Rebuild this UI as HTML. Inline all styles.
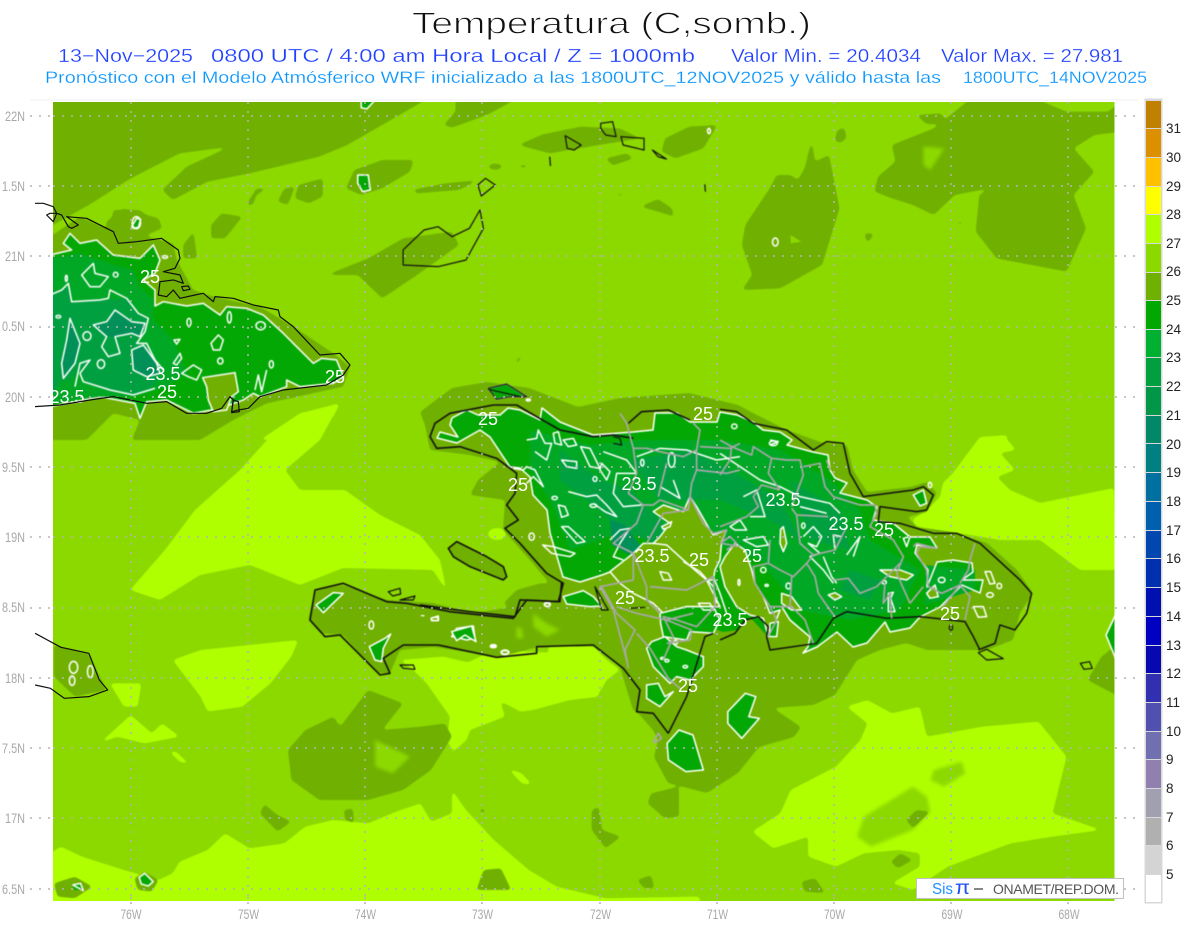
<!DOCTYPE html>
<html><head><meta charset="utf-8"><title>Temperatura</title>
<style>
html,body{margin:0;padding:0;background:#fff}
svg{display:block}
text{font-family:"Liberation Sans",sans-serif;white-space:pre}
.d{fill:#70b000}.l{fill:#b0ff00}.m{fill:#8cd900}
.g1{fill:#04a804}.g2{fill:#00a826}.g3{fill:#00a040}.g4{fill:#009058}
.w{fill:none;stroke:#fff;stroke-width:1.5;vector-effect:non-scaling-stroke;stroke-linejoin:round}
.wd{fill:#70b000;stroke:#fff;stroke-width:1.5;vector-effect:non-scaling-stroke;stroke-linejoin:round}
.wg{fill:#04a804;stroke:#fff;stroke-width:1.5;vector-effect:non-scaling-stroke;stroke-linejoin:round}
.k{fill:none;stroke:#111;stroke-width:1.2;vector-effect:non-scaling-stroke;stroke-linejoin:round}
.y{fill:none;stroke:#a8a8a8;stroke-width:1.7;vector-effect:non-scaling-stroke;stroke-linejoin:round}
.lb{fill:#fff;font-size:18px;text-anchor:middle}
.ax{fill:#a8a8a8;font-size:13.5px}
.lg{fill:#222;font-size:13.5px}
</style></head><body>
<svg width="1200" height="927" viewBox="0 0 1200 927" xmlns="http://www.w3.org/2000/svg">
<rect width="1200" height="927" fill="#fff"/>
<defs>
<clipPath id="mp"><rect x="53" y="102" width="1061.500" height="799"/></clipPath>
<filter id="rd" filterUnits="userSpaceOnUse" x="0" y="0" width="1200" height="927" color-interpolation-filters="sRGB">
<feGaussianBlur stdDeviation="1.8"/>
<feComponentTransfer><feFuncA type="linear" slope="7" intercept="-3"/></feComponentTransfer>
</filter>
<filter id="sf" filterUnits="userSpaceOnUse" x="0" y="0" width="1200" height="927" color-interpolation-filters="sRGB">
<feGaussianBlur stdDeviation="0.45"/>
</filter>
</defs>
<g clip-path="url(#mp)">
<rect x="53" y="102" width="1062" height="799" class="m"/>
<g filter="url(#sf)">

<g filter="url(#rd)">
<!-- light regions -->
<polygon class="l" points="340,403 300,414 267,440 240,470 195,510 165,550 130,590 160,600 200,575 250,565 300,585 343,568 433,570 447,592 440,560 420,535 380,515 345,490 300,490 285,470 320,440"/>
<ellipse class="l" cx="497" cy="534" rx="9" ry="6"/>
<polygon class="l" points="1035,433 1005,437 1016,450 1000,453 1015,470 997,477 1010,490 1040,503 1114,488 1116,570 1080,570 1040,540 1000,540 953,532 917,527 912,520 927,510 940,497 943,483 953,473 980,437"/>
<g transform="translate(300 570) scale(.3333)">
<polygon class="l" points="300,270 430,260 600,300 770,280 740,230 880,230 920,270 960,300 920,330 900,365 700,420 660,425 600,390 615,440 510,480 500,510 460,545 440,510 450,440 380,340 340,300"/>
</g>
<g transform="translate(40 640) scale(.6983 .3333)">
<polygon class="l" points="15,640 30,620 60,650 120,690 170,720 190,700 200,665 240,630 265,580 300,625 350,610 380,560 420,540 470,550 510,515 545,490 560,545 590,520 590,450 610,510 650,600 700,690 740,740 810,775 945,770 945,800 15,800"/>
<polygon class="l" points="190,60 230,30 370,0 360,50 330,130 290,200 240,215 230,170"/>
<polygon class="l" points="85,310 130,225 160,280 175,250 200,290 150,310 110,290"/>
<polygon class="l" points="100,130 145,130 140,200 120,200"/>
<polygon class="l" points="185,335 195,335 215,375 200,365"/>
<polygon class="l" points="1185,180 1155,200 1185,250 1175,300 1140,380 1075,450 1060,520 1020,575 1050,625 1100,590 1100,650 1140,680 1180,640 1230,630 1260,640 1260,680 1220,730 1250,750 1300,680 1390,610 1450,590 1520,570 1450,520 1470,350 1430,245 1350,260 1270,290 1260,200 1220,220"/>
<polygon class="l" points="590,220 660,185 690,215 740,185 800,170 800,100 750,40 650,30 560,120 600,170"/>
<polygon class="l" points="670,385 690,400 705,435 690,430"/>
<polygon class="m" points="1280,390 1320,365 1325,400 1295,440 1275,420"/>
<polygon class="m" points="1180,530 1250,440 1270,470 1275,515 1250,570 1190,620 1170,590"/>
<polygon class="m" points="1140,700 1190,650 1250,650 1220,700 1170,750"/>
</g>
</g>

<g filter="url(#rd)">
<!-- dark regions top -->
<g transform="translate(40 95) scale(.6983 .3333)">
<polygon class="d" points="15,15 552,15 490,90 440,150 400,185 300,235 240,260 190,315 175,285 210,215 272,155 200,175 130,250 70,330 40,365 15,395"/>
<polygon class="d" points="595,15 680,15 640,60 590,98 578,90 595,50"/>
<polygon class="d" points="450,225 490,195 535,195 530,230 490,280 460,300 438,280"/>
<polygon class="d" points="295,330 310,280 325,280 310,300 305,330"/>
<polygon class="d" points="340,320 350,280 365,275 355,330"/>
<polygon class="d" points="370,270 405,250 405,305 385,325 365,310"/>
<polygon class="d" points="245,390 260,355 290,365 265,430 245,430"/>
<polygon class="d" points="205,450 220,410 225,490 205,490"/>
<polygon class="d" points="533,285 580,265 628,255 600,285 540,295"/>
<polygon class="d" points="685,150 720,118 775,95 830,100 860,130 800,150 730,175"/>
<polygon class="d" points="895,130 930,95 970,90 950,160 910,190 890,170"/>
<polygon class="d" points="810,190 840,175 850,190 820,212"/>
<ellipse class="d" cx="652" cy="215" rx="10" ry="9"/><ellipse class="d" cx="692" cy="214" rx="6" ry="5"/>
<polygon class="d" points="860,335 885,312 905,340 908,365 885,350"/>
<polygon class="d" points="820,295 840,295 830,305"/>
<polygon class="d" points="1005,450 1010,390 1045,280 1055,240 1075,240 1085,255 1095,220 1105,135 1110,200 1130,180 1145,340 1120,510 1060,580 1005,585 1020,540"/>
<polygon class="d" points="1255,60 1290,55 1300,85 1270,88"/>
<polygon class="d" points="1195,290 1200,245 1225,200 1220,150 1280,100 1310,50 1330,15 1430,15 1470,50 1530,50 1550,15 1550,110 1510,120 1480,160 1510,230 1480,300 1498,400 1470,530 1370,490 1340,410 1345,300 1360,280 1310,300 1280,360 1250,330 1220,310"/>
<polygon class="m" points="1265,155 1295,160 1275,225 1265,210"/>
<polygon class="d" points="1142,105 1152,98 1155,130 1145,145 1138,135"/>
<polygon class="d" points="1180,415 1195,415 1185,445"/>
<polygon class="d" points="410,540 470,490 520,430 590,410 600,450 540,540 490,610 470,570 455,540"/>
<polygon class="d" points="95,380 120,340 170,370 175,400 130,440 95,400"/>
<polygon class="d" points="680,800 695,765 685,805"/>
<polygon class="d" points="920,405 930,395 925,410"/>
<polygon class="d" points="1310,385 1322,378 1320,392"/>
</g>

<!-- dark regions bottom -->
<g transform="translate(40 640) scale(.6983 .3333)">
<polygon class="d" points="355,330 380,270 420,230 430,260 470,150 520,190 490,270 545,260 580,250 590,290 560,390 520,450 470,480 400,480 360,420"/>
<polygon class="m" points="480,300 530,350 505,400 480,380"/>
<polygon class="d" points="875,460 915,440 915,530 895,535 870,490"/>
<polygon class="d" points="1550,0 1520,50 1500,120 1550,175"/>
<polygon class="d" points="315,520 330,455 320,490 340,525 360,545 340,575"/>
<polygon class="d" points="435,510 448,505 450,550 437,540"/>
<polygon class="d" points="790,510 800,500 805,570 832,590 810,625 790,570"/>
<polygon class="d" points="625,510 640,505 635,520"/>
<polygon class="d" points="635,690 660,685 675,750 625,750"/>
<polygon class="d" points="855,720 875,705 880,745 865,745"/>
<polygon class="d" points="1090,725 1110,715 1125,760 1095,755"/>
<polygon class="d" points="20,15 70,40 95,150 50,170 20,110"/>
<polygon class="d" points="20,730 50,710 75,740 50,775 25,770"/>
<polygon class="d" points="135,715 150,695 170,720 160,755 140,750"/>
<polygon class="d" points="1120,260 1128,262 1122,275"/>
<polygon class="d" points="1218,665 1232,640 1250,660 1228,685"/>
<polygon class="d" points="1240,540 1255,510 1275,515 1250,565"/>
</g>

<!-- dark around Cuba -->
<g transform="translate(0 200) scale(.3333)">
<polygon class="d" points="150,110 240,50 330,90 340,30 420,30 470,70 440,110 520,130 530,180 580,270 640,290 780,320 880,380 1000,460 1050,500 1030,560 800,610 700,660 600,720 395,720 420,660 340,640 260,720 150,720"/>
</g>

<!-- dark around Hispaniola -->
<polygon class="d" points="420,412 452,388 487,382 529,388 578,407 620,398 689,393 738,405 753,413 787,430 823,443 847,445 853,470 867,492 910,487 927,482 937,493 927,512 907,517 917,527 953,532 987,543 1017,570 1033,593 1020,613 1013,640 987,650 927,650 906,643 880,650 857,660 835,695 813,705 773,708 801,727 794,737 759,747 738,773 707,793 668,783 654,757 658,740 653,730 638,713 633,710 620,667 593,645 537,647 500,657 433,647 400,650 390,673 377,673 343,635 320,633 308,620 315,590 343,585 387,600 433,603 473,613 513,607 520,600 558,600 555,590 530,560 503,530 505,500 470,495 478,480 500,462 470,455 430,450 425,425"/>
<g transform="translate(420 380) scale(.3333)">
<polygon class="d" points="85,505 110,485 200,530 250,560 260,590 250,600 150,560 100,530"/>
</g>
<g transform="translate(300 570) scale(.3333)">
<polygon class="d" points="610,100 650,60 720,40 790,40 790,100 690,110 640,120"/>
<polygon class="m" points="650,170 665,175 670,205 650,205"/>
<polygon class="m" points="700,130 740,160 780,180 740,200 700,170"/>
</g>
</g>
<g filter="url(#rd)">
<g transform="translate(0 200) scale(.3333)"><polygon class="l" points="780,720 900,640 1020,610 1000,650 920,720"/></g>
<g transform="translate(40 95) scale(.6983 .3333)"><polygon class="l" points="745,765 765,765 755,772"/></g>
<g transform="translate(300 570) scale(.3333)"><polygon class="l" points="890,170 910,165 905,180"/></g>
</g>

<g transform="translate(40 640) scale(.6983 .3333)">
<polygon class="wg" points="142,712 150,700 162,725 155,738 145,732"/>
<polygon class="g1" points="45,735 58,730 62,750 50,750"/>
<polygon class="w" points="47,735 58,730 62,752"/>
</g>

<!-- Cuba green -->
<g transform="translate(0 200) scale(.3333)">
<polygon class="g1" stroke="#fff" style="stroke-width:1.5;vector-effect:non-scaling-stroke;stroke-linejoin:round" points="150,165 215,150 190,130 210,100 240,130 290,120 340,165 420,175 460,135 480,180 465,220 430,240 465,270 465,318 490,305 560,318 610,310 660,345 680,320 740,325 790,345 850,400 940,490 965,475 1010,480 1030,530 1000,550 900,560 860,540 860,560 780,590 760,580 730,600 660,625 580,640 500,600 440,605 420,655 405,610 300,590 150,620"/>
<polygon class="g2" points="150,175 240,160 330,190 400,210 420,260 460,300 460,360 520,420 560,520 500,560 400,590 300,590 150,610"/>
<polygon class="g3" points="150,290 205,260 215,305 325,300 380,295 415,340 445,355 435,395 410,430 440,430 465,480 490,510 460,560 400,585 330,570 250,545 240,510 210,540 185,540 150,600"/>
<polygon class="g4" points="280,375 320,365 345,330 395,365 435,370 420,410 395,400 345,410 320,410 305,400"/>
<polygon class="g4" points="395,450 430,435 470,490 480,520 440,530 400,510"/>
<polygon class="g4" points="210,355 200,420 185,490 190,535 225,490 240,430"/>
<polygon class="wd" points="608,533 660,525 705,518 715,575 695,590 680,630 640,635 625,600 620,560"/>
<polyline class="w" points="150,285 185,270 205,250 215,305 300,300 325,295 330,270 380,295 415,340 445,355 435,395 410,430 440,430 465,480 490,510"/>
<polygon class="w" points="280,375 320,365 345,330 395,365 435,370 420,410 395,400 345,410 360,460 325,470 305,440 320,410"/>
<polygon class="w" points="210,355 200,420 185,490 190,535 225,490 240,430"/>
<polygon class="w" points="245,225 280,190 285,220 325,230 300,260 270,260"/>
<polygon class="w" points="395,450 430,435 470,490 480,520 440,530 400,510"/>
<polyline class="w" points="225,560 240,490 270,480 240,520 250,545 330,570 400,585 465,565"/>
<polygon class="w" points="633,430 655,405 670,420 660,450 640,450"/>
<polygon class="w" points="545,520 580,495 605,510 590,540 565,530"/>
<polygon class="w" points="520,490 540,460 545,475 530,495"/>
<polygon class="w" points="522,420 540,418 530,432"/>
<ellipse class="w" cx="688" cy="352" rx="6" ry="17"/><ellipse class="w" cx="567" cy="367" rx="6" ry="12"/><ellipse class="w" cx="782" cy="377" rx="14" ry="12"/><ellipse class="w" cx="661" cy="483" rx="8" ry="9"/><ellipse class="w" cx="303" cy="492" rx="11" ry="13"/><ellipse class="w" cx="261" cy="408" rx="12" ry="13"/><ellipse class="w" cx="347" cy="224" rx="7" ry="7"/><ellipse class="w" cx="495" cy="171" rx="8" ry="4"/><ellipse class="w" cx="175" cy="350" rx="7" ry="4"/><ellipse class="w" cx="199" cy="235" rx="3" ry="9"/><ellipse class="w" cx="814" cy="493" rx="6" ry="11"/>
<polygon class="wg" points="395,80 410,55 422,58 415,82 400,85"/>
<polyline class="w" points="765,570 775,525 785,575 800,510"/>
</g>

<!-- Hispaniola green -->
<polygon class="g1" points="452,418 467,410 478,415 500,415 508,408 520,410 540,420 542,408 560,422 593,435 633,432 653,430 655,413 677,413 690,422 717,422 720,412 737,415 753,422 763,430 780,432 792,440 787,445 813,452 828,455 830,470 835,478 847,483 840,493 867,500 877,507 873,520 893,523 910,537 930,537 937,548 917,545 915,553 928,570 927,587 937,562 953,560 972,563 973,572 962,580 983,580 980,593 962,585 940,607 920,617 910,628 890,632 885,622 867,643 853,647 837,632 817,647 803,653 808,647 810,637 790,620 782,607 775,622 770,638 768,637 750,617 737,630 723,632 712,628 715,620 713,607 707,581 687,561 653,543 633,557 610,572 602,575 580,582 563,577 550,533 547,510 533,495 530,477 520,468 510,467 490,437 480,430 457,443 437,438 440,432 458,437 450,425"/>
<polygon class="g2" points="530,430 590,445 640,440 720,440 780,450 830,480 860,510 870,540 920,570 900,610 850,620 800,610 760,560 700,540 650,520 600,540 570,550 550,500 530,470"/>
<polygon class="g2" points="925,565 975,570 975,590 925,605"/>
<polygon class="g3" points="560,450 600,480 630,490 680,540 660,545 620,530 600,510 560,480"/>
<polygon class="g3" points="630,460 690,450 730,470 780,500 800,540 770,520 720,500 660,500"/>
<polygon class="g3" points="790,480 840,510 850,550 810,540"/>
<polygon class="g3" points="850,570 880,580 870,600 840,590"/>
<polygon class="g4" points="610,520 625,525 640,545 655,555 630,555 612,545"/>
<g fill="none">
<polyline class="w" points="452,418 467,410 478,415 500,415 508,408 520,410 540,420 542,408 560,422 593,435 633,432 653,430 655,413 677,413 690,422 717,422 720,412 737,415 753,422 763,430 780,432 792,440 787,445 813,452 828,455 830,470 835,478 847,483 840,493 867,500 877,507 873,520 893,523 910,537 930,537 937,548 917,545 915,553 928,570 927,587 937,562 953,560 972,563 973,572 962,580 983,580 980,593 962,585 940,607 920,617 910,628 890,632 885,622 867,643 853,647 837,632 817,647 803,653 808,647 810,637 790,620 782,607"/>
<polyline class="w" points="633,557 610,572 602,575 580,582 563,577 550,533 547,510 533,495 530,477 520,468 510,467 490,437 480,430 457,443 437,438 440,432 458,437 450,425 452,418"/>
</g>

<g transform="translate(420 380) scale(.3333)">
<polygon class="wd" points="570,575 640,520 670,490 740,490 790,540 860,600 880,640 900,680 880,680 800,680 730,700 700,670 640,640 600,610"/>
<polygon class="wd" points="810,350 830,380 870,450 880,465 920,450 905,485 900,540 885,570 880,600 860,600 790,540 740,495 700,490 720,470 750,430 700,395 730,375 790,395"/>
<polygon class="wg" points="720,700 800,680 880,680 900,720 880,760 810,755 800,780 730,770 722,730"/>
<polygon class="wg" points="430,650 490,632 520,650 545,678 510,680 440,672"/>
<polygon class="wg" points="205,25 260,12 320,50 270,50 230,58"/>
<polygon class="wg" points="95,770 110,745 160,738 165,775 140,780 120,775"/>
<polygon class="wd" points="725,440 755,425 750,440 730,448"/>
<polyline class="w" points="320,180 350,175 355,150 375,190 395,190 380,240 345,215"/>
<polygon class="w" points="400,160 415,155 425,195 405,190"/>
<polygon class="w" points="430,180 460,175 470,195 445,200"/>
<polygon class="w" points="425,240 470,245 470,265 440,260"/>
<polygon class="w" points="482,200 510,205 540,265 510,260"/>
<polygon class="w" points="545,250 570,275 560,300 540,270"/>
<polyline class="w" points="280,265 310,270 320,260 345,270 370,320 340,290 320,310"/>
<polygon class="w" points="425,440 445,440 495,485 470,490"/>
<polygon class="w" points="368,495 400,500 465,520 450,530 395,520"/>
<polygon class="w" points="415,375 435,380 445,405 425,412"/>
<polyline class="w" points="445,335 500,350 530,345 560,375 590,410 555,395 520,370"/>
<polyline class="w" points="550,215 620,240 650,280 590,280 580,340 610,380 665,375"/>
<polyline class="w" points="650,230 720,205 800,210 890,240 960,230"/>
<polyline class="w" points="720,320 780,355 760,300"/>
<polyline class="w" points="570,480 600,450 630,445 600,490 580,530 610,540"/>
<polyline class="w" points="790,545 840,575 880,620 890,670"/>
<polyline class="w" points="880,590 900,640 920,700"/>
<polygon class="w" points="720,575 745,580 755,600 730,600"/>
<polygon class="w" points="835,670 870,670 880,690 850,690"/>
<ellipse class="w" cx="667" cy="248" rx="5" ry="10"/><ellipse class="w" cx="755" cy="240" rx="10" ry="22"/><ellipse class="w" cx="525" cy="297" rx="6" ry="7"/><ellipse class="w" cx="404" cy="354" rx="8" ry="5"/><ellipse class="w" cx="520" cy="377" rx="10" ry="5"/><ellipse class="w" cx="335" cy="470" rx="8" ry="11"/><ellipse class="w" cx="382" cy="675" rx="8" ry="5"/><ellipse class="w" cx="325" cy="60" rx="6" ry="3"/><ellipse class="w" cx="45" cy="717" rx="11" ry="5"/><ellipse class="w" cx="220" cy="797" rx="8" ry="3"/><ellipse class="w" cx="255" cy="817" rx="12" ry="5"/>
</g>
<g transform="translate(720 380) scale(.3333)">
<polygon class="wd" points="15,530 45,490 75,510 95,570 105,610 130,650 150,700 180,690 165,730 145,770 130,715 90,705 50,680 15,620 0,560"/>
<polygon class="wg" points="150,730 175,725 170,770 148,770"/>
<polygon class="wd" points="620,640 645,615 655,650 630,655"/>
<polygon class="wd" points="795,575 812,575 825,610 810,612"/>
<polygon class="wd" points="760,680 790,680 800,710 775,712"/>
<polygon class="wd" points="185,640 215,650 245,690 215,690 185,670"/>
<polygon class="wd" points="325,645 345,638 365,650 345,660"/>
<polygon class="wd" points="480,570 540,570 580,585 560,600 510,590"/>
<polygon class="wd" points="182,448 190,440 200,490 190,515 180,490"/>
<polygon class="wg" points="580,345 610,330 620,370 600,378"/>
<polyline class="w" points="0,220 60,260 120,300 180,320 240,350 330,370 360,400"/>
<polyline class="w" points="240,380 320,400"/>
<polyline class="w" points="70,350 110,330 135,410 90,410"/>
<polyline class="w" points="150,180 175,185 150,195"/>
<polyline class="w" points="250,470 280,440 305,470 290,500 265,490 300,520 270,530 310,570 340,610"/>
<polyline class="w" points="380,525 420,470 400,530"/>
<polygon class="w" points="340,465 365,470 345,510"/>
<polygon class="w" points="550,475 570,470 560,500"/>
<polygon class="w" points="70,480 130,470 145,495 110,500"/>
<polygon class="w" points="30,440 60,420 80,450 45,450"/>
<polygon class="w" points="505,640 520,637 512,655 525,695 505,695"/>
<polyline class="w" points="310,530 335,590 350,610"/>
<ellipse class="w" cx="43" cy="139" rx="8" ry="7"/><ellipse class="w" cx="160" cy="190" rx="12" ry="7"/><ellipse class="w" cx="250" cy="437" rx="5" ry="8"/><ellipse class="w" cx="130" cy="570" rx="8" ry="8"/><ellipse class="w" cx="57" cy="607" rx="3" ry="9"/><ellipse class="w" cx="140" cy="616" rx="5" ry="3"/><ellipse class="w" cx="205" cy="618" rx="7" ry="9"/><ellipse class="w" cx="665" cy="600" rx="10" ry="8"/><ellipse class="w" cx="810" cy="645" rx="10" ry="7"/><ellipse class="w" cx="838" cy="618" rx="7" ry="8"/><ellipse class="w" cx="630" cy="315" rx="5" ry="8"/><ellipse class="w" cx="493" cy="607" rx="6" ry="5"/>
</g>

<!-- Haiti south lobes + others -->
<g transform="translate(300 570) scale(.3333)">
<polygon class="wg" points="1055,215 1095,200 1130,230 1160,240 1210,260 1210,290 1170,330 1130,320 1110,340 1060,290 1040,235"/>
<polygon class="wg" points="1040,345 1075,340 1095,380 1120,365 1080,410 1040,385"/>
<polygon class="wg" points="48,105 100,68 130,70 70,128"/>
<polygon class="wg" points="208,230 255,205 272,192 250,235 245,275 225,270"/>
<polygon class="wg" points="455,185 515,168 528,215 495,195 470,212"/>
<ellipse class="w" cx="214" cy="165" rx="7" ry="12"/>
<polygon class="w" points="393,145 415,138 415,152 395,152"/>
<ellipse class="w" cx="580" cy="229" rx="9" ry="4"/><ellipse class="w" cx="615" cy="247" rx="11" ry="7"/><ellipse class="w" cx="742" cy="103" rx="9" ry="6"/><ellipse fill="#fff" cx="368" cy="137" rx="6" ry="2"/>
<ellipse class="w" cx="1088" cy="265" rx="6" ry="3"/><ellipse class="w" cx="1101" cy="272" rx="6" ry="4"/><ellipse class="w" cx="1156" cy="290" rx="7" ry="4"/><ellipse class="w" cx="1127" cy="217" rx="5" ry="7"/>
</g>
<g transform="translate(40 640) scale(.6983 .3333)">
<polygon class="wg" points="915,270 935,285 950,390 925,395 900,360 898,310"/>
<polygon class="wg" points="985,215 1010,160 1025,170 1015,230 1030,235 1005,295 985,250"/>
<ellipse class="w" cx="48" cy="82" rx="6" ry="18"/><ellipse class="w" cx="72" cy="95" rx="4" ry="18"/><ellipse class="w" cx="46" cy="122" rx="4" ry="14"/>
</g>
<polygon class="wg" points="1117,612 1106,635 1117,662"/>
<g transform="translate(40 95) scale(.6983 .3333)">
<polygon class="wg" points="455,240 470,240 473,285 462,290 455,265"/>
<polygon class="wg" points="460,15 480,15 468,42 460,38"/>
<ellipse class="w" cx="138" cy="383" rx="6" ry="18"/>
<ellipse class="w" cx="958" cy="108" rx="2" ry="8"/>
<ellipse class="w" cx="1053" cy="441" rx="4" ry="12"/>
<polygon class="m" points="1075,420 1090,440 1075,445"/>
</g>

<!-- Coast lines inside map -->
<g transform="translate(40 95) scale(.6983 .3333)">
<polygon class="k" points="520,510 520,465 550,405 570,395 590,425 615,400 630,345 635,400 610,495 570,515"/>
<polygon class="k" points="627,270 638,250 652,270 632,303"/>
<polygon class="k" points="803,85 820,80 825,125 810,120 803,100"/>
<polygon class="k" points="832,125 865,130 865,165 835,150"/>
<polygon class="k" points="752,122 775,150 765,165 755,160"/>
<polygon class="k" points="877,165 897,192 885,185"/>
<polyline class="k" points="730,185 731,213"/><polyline class="k" points="952,268 953,290"/>
</g>
<g transform="translate(420 380) scale(.3333)">
<polyline class="k" style="stroke-width:1.6" points="0,675 150,695 285,710 300,660 415,665 430,610 380,580 300,490 255,445 295,420 260,375 285,340 290,280 230,235 120,200 50,205 30,170 45,130 90,100 220,75 290,75 350,110 420,150 520,170 580,165 640,175"/>
<polygon class="k" style="stroke-width:1.6" points="85,505 110,485 200,530 250,560 260,590 250,600 150,560 100,530"/>
<polygon class="k" points="205,25 260,12 320,50 270,50 230,58"/>
<polyline class="k" points="205,28 310,52"/>
<polyline class="k" style="stroke-width:1.6" points="625,130 665,95 745,90 810,120"/>
<polyline class="k" points="580,170 600,175 605,195 580,190"/>
</g>
<g transform="translate(720 380) scale(.3333)">
<polyline class="k" style="stroke-width:1.5" points="0,88 50,95 100,130 200,150 280,210 320,185 370,190 390,280 430,350 580,330 610,320 640,345 620,390 590,395 480,380 475,425 540,430 640,460 710,460 780,490 900,600 935,640 920,700 885,750 840,735 825,790 775,810"/>
<polyline class="k" style="stroke-width:1.5" points="780,810 760,770 735,725 600,710 500,715 380,695 340,715 290,790 150,810 140,770 145,740 115,710 75,720 45,760 0,780"/>
<polygon class="k" points="775,818 800,808 850,836 800,840"/>
<ellipse class="k" cx="693" cy="743" rx="5" ry="8"/>
</g>
<g transform="translate(300 570) scale(.3333)">
<polyline class="k" style="stroke-width:1.6" points="1105,490 1060,430 1010,425 1020,360 970,295 880,225 710,230 710,250 590,262 415,225 310,225 250,265 270,310 240,315 120,195 75,200 30,150 45,60 130,40 260,95 320,100 450,125 590,140 640,145 680,90 780,95 785,35"/>
<polyline class="k" style="stroke-width:1.5" points="1105,490 1160,380 1215,200 1240,190"/>
<polygon class="k" points="300,285 340,285 345,298 310,295"/>
<polygon class="k" points="265,65 300,55 302,72 278,78"/>
<polygon class="k" points="300,90 345,78 340,90"/>
<polygon class="k" points="885,50 925,120 905,120"/>
<polyline class="k" points="990,115 1035,112"/>
</g>
<g transform="translate(40 640) scale(.6983 .3333)">
<polygon class="k" points="1490,70 1503,65 1507,85 1495,88"/>
</g>

<!-- Gray borders -->
<g transform="translate(720 380) scale(.3333)">
<polyline class="y" points="0,180 35,200 30,240 0,285"/>
<polyline class="y" points="35,200 95,225 100,200 155,235 145,280 180,330"/>
<polyline class="y" points="155,235 200,240 240,240 250,285 215,380"/>
<polyline class="y" points="250,260 300,250 315,320 340,350 420,375 465,375"/>
<polyline class="y" points="180,330 125,315 100,350 115,380 80,410 0,440"/>
<polyline class="y" points="465,375 470,400 450,440 520,480 550,530 530,580 570,670"/>
<polyline class="y" points="215,385 230,405 325,410"/>
<polyline class="y" points="230,405 240,490 280,525 345,510 380,440"/>
<polyline class="y" points="280,525 260,550 285,590 295,640 330,690 345,710"/>
<polyline class="y" points="260,550 220,590 180,570 145,550 150,480"/>
<polyline class="y" points="145,550 100,560 105,610 150,680 215,680 255,720 280,790"/>
<polyline class="y" points="215,590 210,680"/>
<polyline class="y" points="345,600 385,595 420,640 470,620 490,600 510,580 540,550"/>
<polyline class="y" points="495,610 490,670 510,640 515,715"/>
<polyline class="y" points="580,500 590,490 650,505 600,500 590,520 620,570 625,620 665,640 720,615 750,650 735,720"/>
<polyline class="y" points="720,615 670,680"/>
<polyline class="y" points="765,490 750,540 745,570 720,610"/>
<polyline class="y" points="150,680 170,720 145,770"/>
<polyline class="y" points="570,670 610,620"/>
<polyline class="y" points="0,490 30,470 50,490 20,510"/>
<polyline class="y" points="320,240 330,270"/>
</g>
<g transform="translate(420 380) scale(.3333)">
<polyline class="y" points="600,100 620,130 640,205 650,280 625,340 670,375 650,430 580,490 640,520 680,620"/>
<polyline class="y" points="640,205 680,205 720,215 790,230 830,210 840,150 820,130"/>
<polyline class="y" points="840,200 930,205 960,190"/>
<polyline class="y" points="830,210 830,270 815,310 805,390 720,360"/>
<polyline class="y" points="830,270 920,280 960,270"/>
<polyline class="y" points="740,250 715,350"/>
<polyline class="y" points="670,375 700,375 720,360"/>
<polyline class="y" points="680,490 730,400 805,390"/>
<polyline class="y" points="810,350 850,430 880,460 920,450 905,490 960,500"/>
<polyline class="y" points="690,620 800,630 880,590 885,680 830,740 770,720 730,710 760,770 730,840"/>
<polyline class="y" points="640,600 540,620 580,690 620,840"/>
<polyline class="y" points="680,620 680,660 720,700"/>
<polyline class="y" points="640,520 640,600"/>
</g>
<g transform="translate(300 570) scale(.3333)">
<polyline class="y" points="905,50 950,130 1005,180 975,240 985,295"/>
<polyline class="y" points="950,110 1010,130 1100,150 1180,130"/>
<polyline class="y" points="1010,190 1050,235 1105,325 1140,355"/>
<polyline class="y" points="1100,150 1175,180 1170,210 1100,220"/>
<polygon class="y" points="1060,515 1075,490 1085,505 1065,518"/>
</g>
</g>

<!-- Grid -->
<g stroke="#b4b4b4" stroke-width="1.5" stroke-dasharray="2 7" fill="none">
<path d="M131 102V897M248 102V897M365 102V897M482 102V897M600 102V897M717 102V897M834 102V897M951 102V897M1068 102V897"/>
<path d="M53 116H1115M53 186H1115M53 256H1115M53 327H1115M53 397H1115M53 467H1115M53 537H1115M53 608H1115M53 678H1115M53 748H1115M53 818H1115M53 889H1115"/>
</g>

<!-- Map labels -->
<text class="lb" x="150" y="283">25</text><text class="lb" x="163" y="380">23.5</text><text class="lb" x="167" y="398">25</text><text class="lb" x="335" y="383">25</text><text class="lb" x="67" y="403">23.5</text>
<text class="lb" x="488" y="425">25</text><text class="lb" x="518" y="491">25</text><text class="lb" x="639" y="490">23.5</text><text class="lb" x="703" y="420">25</text><text class="lb" x="783" y="506">23.5</text><text class="lb" x="846" y="530">23.5</text><text class="lb" x="884" y="536">25</text><text class="lb" x="652" y="562">23.5</text><text class="lb" x="699" y="566">25</text><text class="lb" x="752" y="562">25</text><text class="lb" x="625" y="604">25</text><text class="lb" x="730" y="626">23.5</text><text class="lb" x="950" y="620">25</text><text class="lb" x="688" y="692">25</text>
</g>

<!-- Coast extending past map edge -->
<g transform="translate(0 200) scale(.3333)">
<polyline class="k" points="105,10 130,10 160,20 170,40 150,40 140,45 160,65 170,40 185,45 205,80 215,85 235,75 200,50 260,55 340,95 355,130 410,125 485,115 535,150 540,175 525,205 490,215 540,225 550,250 520,240 480,245 475,285 500,290 520,270 540,295 585,285 610,280 640,305 645,290 700,295 760,315 835,330 840,350 880,380 960,465 1020,460 1050,495 1030,525 980,555 850,570 780,590 745,625 715,630 695,635 700,600 690,590 665,625 620,640 560,640 500,605 440,610 340,590 270,600 180,615 105,620"/>
<polygon class="k" points="545,260 565,258 570,268 550,272"/>
<polygon class="k" points="700,600 715,605 718,635 695,638"/>
</g>
<g transform="translate(40 640) scale(.6983 .3333)">
<polyline class="k" points="-7,-20 30,22 70,40 85,120 97,150 70,170 35,175 15,145 -7,135"/>
</g>

<!-- outside ticks -->
<g stroke="#b4b4b4" stroke-width="1.5" stroke-dasharray="2 7" fill="none">
<path d="M30 116H53M30 186H53M30 256H53M30 327H53M30 397H53M30 467H53M30 537H53M30 608H53M30 678H53M30 748H53M30 818H53M30 889H53"/>
<path d="M1115 116H1137M1115 186H1137M1115 256H1137M1115 327H1137M1115 397H1137M1115 467H1137M1115 537H1137M1115 608H1137M1115 678H1137M1115 748H1137M1115 818H1137M1115 889H1137"/>
<path d="M131 897V906M248 897V906M365 897V906M482 897V906M600 897V906M717 897V906M834 897V906M951 897V906M1068 897V906" stroke-dasharray="2 3"/>
</g>
<path d="M30 100H1138" stroke="#f2f2f2" stroke-width="1"/>

<!-- Axis labels -->
<g class="ax">
<text x="5" y="121" textLength="20" lengthAdjust="spacingAndGlyphs">22N</text><text x="2" y="191" textLength="23" lengthAdjust="spacingAndGlyphs">1.5N</text><text x="5" y="261" textLength="20" lengthAdjust="spacingAndGlyphs">21N</text><text x="2" y="331" textLength="23" lengthAdjust="spacingAndGlyphs">0.5N</text><text x="5" y="402" textLength="20" lengthAdjust="spacingAndGlyphs">20N</text><text x="2" y="472" textLength="23" lengthAdjust="spacingAndGlyphs">9.5N</text><text x="5" y="542" textLength="20" lengthAdjust="spacingAndGlyphs">19N</text><text x="2" y="612" textLength="23" lengthAdjust="spacingAndGlyphs">8.5N</text><text x="5" y="683" textLength="20" lengthAdjust="spacingAndGlyphs">18N</text><text x="2" y="753" textLength="23" lengthAdjust="spacingAndGlyphs">7.5N</text><text x="5" y="823" textLength="20" lengthAdjust="spacingAndGlyphs">17N</text><text x="2" y="894" textLength="23" lengthAdjust="spacingAndGlyphs">6.5N</text>
</g>
<g class="ax">
<text x="120.500" y="919" textLength="21" lengthAdjust="spacingAndGlyphs">76W</text><text x="238" y="919" textLength="21" lengthAdjust="spacingAndGlyphs">75W</text><text x="355" y="919" textLength="21" lengthAdjust="spacingAndGlyphs">74W</text><text x="472" y="919" textLength="21" lengthAdjust="spacingAndGlyphs">73W</text><text x="590" y="919" textLength="21" lengthAdjust="spacingAndGlyphs">72W</text><text x="707" y="919" textLength="21" lengthAdjust="spacingAndGlyphs">71W</text><text x="824" y="919" textLength="21" lengthAdjust="spacingAndGlyphs">70W</text><text x="941.500" y="919" textLength="21" lengthAdjust="spacingAndGlyphs">69W</text><text x="1058.500" y="919" textLength="21" lengthAdjust="spacingAndGlyphs">68W</text>
</g>

<!-- Titles -->
<text x="412" y="33.500" font-size="31" fill="#111" stroke="#fff" stroke-width=".9" textLength="399" lengthAdjust="spacingAndGlyphs">Temperatura (C,somb.)</text>
<g font-size="18.500" fill="#2040ff" stroke="#fff" stroke-width=".25">
<text x="58" y="62" textLength="135" lengthAdjust="spacingAndGlyphs">13−Nov−2025</text>
<text x="211" y="62" textLength="484" lengthAdjust="spacingAndGlyphs">0800 UTC / 4:00 am Hora Local / Z = 1000mb</text>
<text x="731" y="62" textLength="190" lengthAdjust="spacingAndGlyphs">Valor Min. = 20.4034</text>
<text x="941" y="62" textLength="182" lengthAdjust="spacingAndGlyphs">Valor Max. = 27.981</text>
</g>
<g font-size="16.500" fill="#0a96ff" stroke="#fff" stroke-width=".2">
<text x="45" y="83" textLength="896" lengthAdjust="spacingAndGlyphs">Pronóstico con el Modelo Atmósferico WRF inicializado a las 1800UTC_12NOV2025 y válido hasta las</text>
<text x="963" y="83" textLength="184" lengthAdjust="spacingAndGlyphs">1800UTC_14NOV2025</text>
</g>

<!-- Legend bar -->
<rect x="1144.500" y="98.500" width="18" height="805" fill="#d8d8d8"/>
<g shape-rendering="crispEdges">
<rect x="1146" y="101" width="15" height="27" fill="#c08000"/>
<rect x="1146" y="129" width="15" height="28" fill="#dc9000"/>
<rect x="1146" y="158" width="15" height="28" fill="#ffc000"/>
<rect x="1146" y="187" width="15" height="27" fill="#ffff00"/>
<rect x="1146" y="215" width="15" height="28" fill="#b0ff00"/>
<rect x="1146" y="244" width="15" height="28" fill="#8cd900"/>
<rect x="1146" y="273" width="15" height="27" fill="#70b000"/>
<rect x="1146" y="301" width="15" height="28" fill="#00a800"/>
<rect x="1146" y="330" width="15" height="27" fill="#00b030"/>
<rect x="1146" y="358" width="15" height="28" fill="#00a040"/>
<rect x="1146" y="387" width="15" height="28" fill="#009848"/>
<rect x="1146" y="416" width="15" height="27" fill="#008868"/>
<rect x="1146" y="444" width="15" height="28" fill="#008080"/>
<rect x="1146" y="473" width="15" height="28" fill="#0070a0"/>
<rect x="1146" y="502" width="15" height="28" fill="#0060b0"/>
<rect x="1146" y="531" width="15" height="27" fill="#0048b0"/>
<rect x="1146" y="559" width="15" height="28" fill="#0030b0"/>
<rect x="1146" y="588" width="15" height="28" fill="#0010b0"/>
<rect x="1146" y="617" width="15" height="28" fill="#0000c0"/>
<rect x="1146" y="646" width="15" height="27" fill="#0808b0"/>
<rect x="1146" y="674" width="15" height="28" fill="#3030b0"/>
<rect x="1146" y="703" width="15" height="28" fill="#5050b0"/>
<rect x="1146" y="732" width="15" height="27" fill="#7070b0"/>
<rect x="1146" y="760" width="15" height="28" fill="#9080b0"/>
<rect x="1146" y="789" width="15" height="28" fill="#a0a0b0"/>
<rect x="1146" y="818" width="15" height="27" fill="#b0b0b0"/>
<rect x="1146" y="846" width="15" height="28" fill="#d4d4d4"/>
<rect x="1146" y="875" width="15" height="27" fill="#fff"/>
</g>
<g class="lg">
<text x="1166" y="133">31</text><text x="1166" y="162">30</text><text x="1166" y="191">29</text><text x="1166" y="219">28</text><text x="1166" y="248">27</text><text x="1166" y="276">26</text><text x="1166" y="305">25</text><text x="1166" y="334">24</text><text x="1166" y="362">23</text><text x="1166" y="391">22</text><text x="1166" y="420">21</text><text x="1166" y="449">20</text><text x="1166" y="477">19</text><text x="1166" y="506">18</text><text x="1166" y="535">17</text><text x="1166" y="563">16</text><text x="1166" y="592">15</text><text x="1166" y="621">14</text><text x="1166" y="650">13</text><text x="1166" y="678">12</text><text x="1166" y="707">11</text><text x="1166" y="736">10</text><text x="1166" y="764">9</text><text x="1166" y="793">8</text><text x="1166" y="822">7</text><text x="1166" y="850">6</text><text x="1166" y="879">5</text>
</g>

<!-- Credit box -->
<rect x="916.500" y="878.500" width="207" height="20" fill="#fff" stroke="#c0c0c0" stroke-width="1"/>
<text x="932" y="894" font-size="15.500" fill="#1e90ff" textLength="21" lengthAdjust="spacingAndGlyphs">Sis</text>
<text x="955" y="894" font-size="19" fill="#2050f0" textLength="15" lengthAdjust="spacingAndGlyphs">π</text>
<path d="M974 889H983" stroke="#444" stroke-width="1.300"/>
<text x="993" y="894" font-size="14" fill="#555" textLength="126" lengthAdjust="spacing">ONAMET/REP.DOM.</text>
</svg>
</body></html>
